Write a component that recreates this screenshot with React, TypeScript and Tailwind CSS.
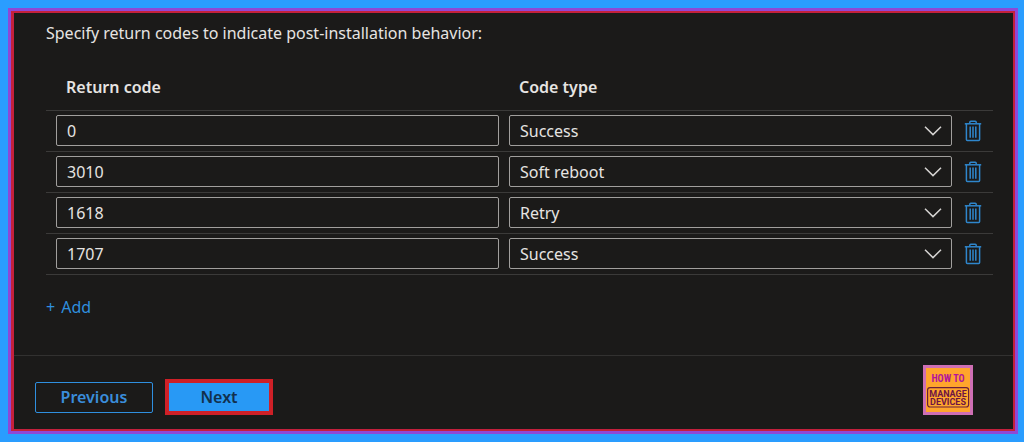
import { useState } from "react";

const INITIAL_CODES = [
  { id: 1, code: "0", type: "Success" },
  { id: 2, code: "3010", type: "Soft reboot" },
  { id: 3, code: "1618", type: "Retry" },
  { id: 4, code: "1707", type: "Success" },
];

const CODE_TYPES = ["Success", "Soft reboot", "Hard reboot", "Retry", "Failed"];

function ChevronIcon() {
  return (
    <svg
      viewBox="0 0 18 10"
      className="pointer-events-none absolute right-2.5 top-[11px] h-2.5 w-[18px]"
      fill="none"
      stroke="#d6d4d2"
      strokeWidth="1.5"
      aria-hidden="true"
    >
      <path d="M1 0.8 9 8.6 17 0.8" />
    </svg>
  );
}

function TrashIcon() {
  return (
    <svg
      viewBox="0 0 18 22"
      className="h-[22px] w-[18px]"
      fill="none"
      stroke="#2f86cc"
      strokeWidth="1.5"
      aria-hidden="true"
    >
      <path d="M0.8 3.8H17.2" />
      <path d="M5.8 3.6V2.2Q5.8 1.2 6.8 1.2H11.2Q12.2 1.2 12.2 2.2V3.6" />
      <path d="M2.4 3.8V19.6Q2.4 20.6 3.4 20.6H14.6Q15.6 20.6 15.6 19.6V3.8" />
      <path d="M6.2 6.4V17.8M9 6.4V17.8M11.8 6.4V17.8" />
    </svg>
  );
}

function Logo() {
  return (
    <svg viewBox="0 0 50 50" className="size-[50px]" role="img" aria-label="How to manage devices">
      <rect width="50" height="50" fill="#cf6fb4" />
      <rect x="3" y="3" width="44" height="44" fill="#ffa52c" />
      <text
        x="25"
        y="17"
        textAnchor="middle"
        fontSize="10"
        fontWeight="700"
        fontFamily="'Roboto Condensed', Roboto, sans-serif"
        fill="#b3149c"
      >
        HOW TO
      </text>
      <rect x="4.6" y="22.6" width="41" height="19.4" rx="2.5" fill="none" stroke="#6b1f3a" strokeWidth="1.2" />
      <g textAnchor="middle" fontSize="9" fontWeight="700" fontFamily="Roboto, sans-serif" fill="#6d1445">
        <text x="25" y="31.5">MANAGE</text>
        <text x="25" y="40">DEVICES</text>
      </g>
    </svg>
  );
}

export default function App() {
  const [rows, setRows] = useState(INITIAL_CODES);

  const update = (id: number, patch: { code?: string; type?: string }) =>
    setRows(rows.map((r) => (r.id === id ? { ...r, ...patch } : r)));

  const addRow = () =>
    setRows([...rows, { id: Math.max(0, ...rows.map((r) => r.id)) + 1, code: "", type: "Success" }]);

  return (
    <div className="flex min-h-screen bg-[#2a9dff] p-2 pr-1.5 font-['Noto_Sans','Open_Sans',sans-serif] text-base text-[#e6e4e2]">
      <div className="flex flex-1 border-3 border-[#8f48d6]">
        <div className="flex min-w-0 flex-1 flex-col border-2 border-l-3 border-[#c4203c] bg-[#1b1a19]">
          <main className="flex-1 pb-8 pl-8 pr-5 pt-2">
            <p className="leading-6">Specify return codes to indicate post-installation behavior:</p>

            <table className="mt-5 w-full table-fixed border-collapse">
              <thead>
                <tr className="h-[45px] border-b border-[#3b3a39] text-left">
                  <th scope="col" className="pl-5 font-semibold">Return code</th>
                  <th scope="col" className="pl-5 font-semibold">Code type</th>
                  <th scope="col" aria-label="Delete" className="w-[41px]" />
                </tr>
              </thead>
              <tbody>
                {rows.map((row) => (
                  <tr key={row.id} className="h-[41px] border-b border-[#3b3a39]">
                    <td className="pl-2.5">
                      <input
                        type="text"
                        aria-label="Return code"
                        value={row.code}
                        onChange={(e) => update(row.id, { code: e.target.value })}
                        className="block h-[31px] w-full rounded-xs border border-[#a19f9d] bg-transparent px-2.5 outline-none"
                      />
                    </td>
                    <td className="pl-2.5">
                      <div className="relative">
                        <select
                          aria-label="Code type"
                          value={row.type}
                          onChange={(e) => update(row.id, { type: e.target.value })}
                          className="block h-[31px] w-full appearance-none rounded-xs border border-[#a19f9d] bg-[#1b1a19] px-2.5 outline-none"
                        >
                          {CODE_TYPES.map((t) => (
                            <option key={t}>{t}</option>
                          ))}
                        </select>
                        <ChevronIcon />
                      </div>
                    </td>
                    <td className="pl-3">
                      <button
                        type="button"
                        aria-label="Delete return code"
                        onClick={() => setRows(rows.filter((r) => r.id !== row.id))}
                        className="block"
                      >
                        <TrashIcon />
                      </button>
                    </td>
                  </tr>
                ))}
              </tbody>
            </table>

            <button type="button" onClick={addRow} className="mt-5 flex gap-1.5 leading-6 text-[#2f8fdf]">
              <span>+</span>
              <span>Add</span>
            </button>
          </main>

          <footer className="flex items-end justify-between border-t border-[#323130] pb-3.5 pl-[21px] pr-10 pt-[9px]">
            <div className="flex items-center gap-3">
              <button
                type="button"
                className="h-[31px] w-[118px] rounded-xs border border-[#2f8fdf] font-semibold leading-none text-[#3a8ddb]"
              >
                Previous
              </button>
              <button
                type="button"
                className="h-9 w-[108px] border-4 border-[#cf2027] bg-[#2899f5] font-semibold leading-none text-[#12304d]"
              >
                Next
              </button>
            </div>
            <Logo />
          </footer>
        </div>
      </div>
    </div>
  );
}
